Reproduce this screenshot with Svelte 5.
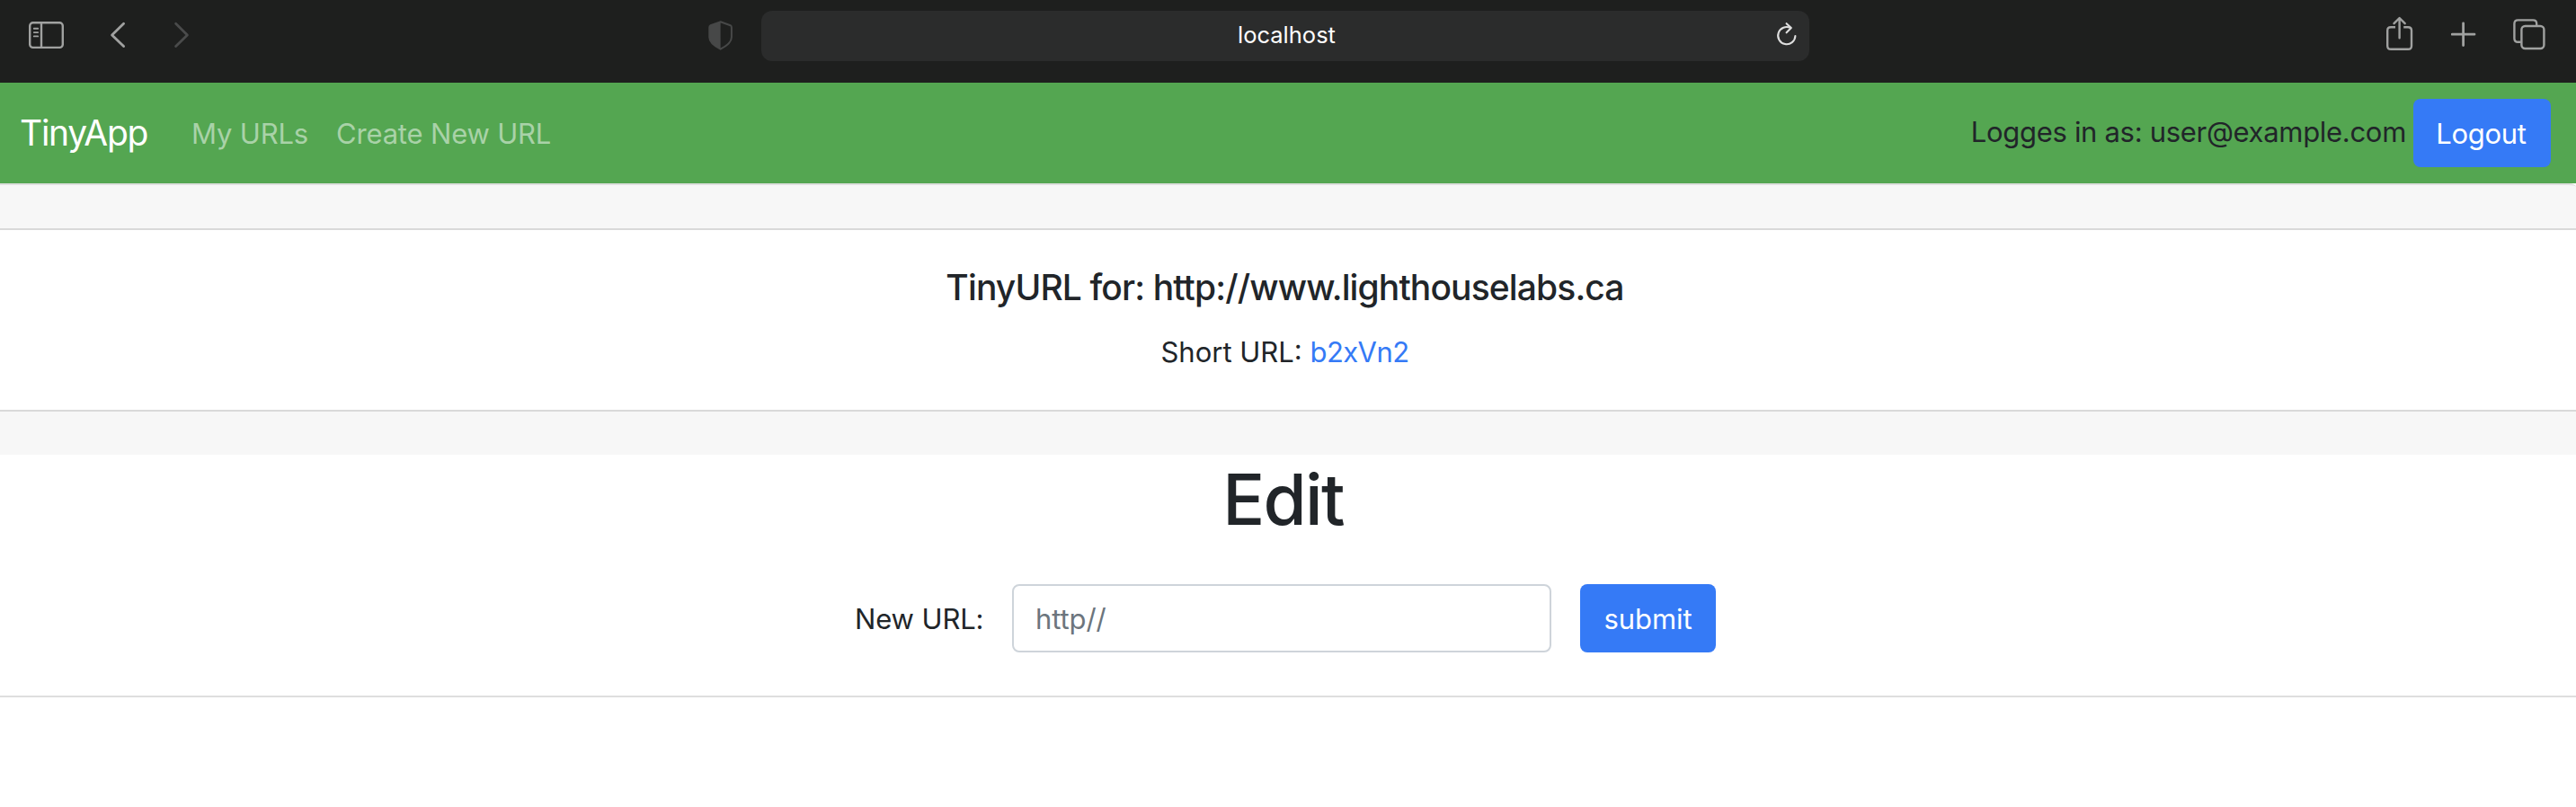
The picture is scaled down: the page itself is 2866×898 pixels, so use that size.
<script>
  let newUrl = $state('');
</script>

<div class="window">
  <div class="toolbar">
    <div class="left">
      <svg class="sidebar" width="40" height="32" viewBox="0 0 40 32" fill="none" stroke="#a0a1a0" stroke-width="2.4">
        <rect x="2.2" y="1.3" width="36.6" height="27.6" rx="3.5" />
        <path d="M15 2v27" />
        <path d="M6.8 7.8h4.4M6.8 12.1h4.4M6.8 16.4h4.4" stroke-width="1.9" stroke-linecap="round" />
      </svg>
      <svg class="back" width="18" height="30" viewBox="0 0 18 30" fill="none" stroke="#a0a1a0" stroke-width="2.8" stroke-linecap="round" stroke-linejoin="round"><path d="M15.6 2.3L2.6 15l13 12.6" /></svg>
      <svg width="18" height="30" viewBox="0 0 18 30" fill="none" stroke="#4a4b4b" stroke-width="2.8" stroke-linecap="round" stroke-linejoin="round"><path d="M2.6 2.3L15.4 15l-12.8 12.6" /></svg>
    </div>
    <svg class="shield" width="28" height="34" viewBox="0 0 28 34">
      <path d="M14.6 2.2L25.6 6.2Q26.9 6.8 26.9 8.4V19.5C26.9 25 20.5 29.6 14.6 32.6C8.7 29.6 2.3 25 2.3 19.5V8.4Q2.3 6.8 3.6 6.2Z" fill="none" stroke="#474848" stroke-width="2" />
      <path d="M14.6 2L3.6 6.2Q2.3 6.8 2.3 8.4V19.5C2.3 25 8.7 29.6 14.6 32.6Z" fill="#474848" />
    </svg>
    <div class="address">
      <span>localhost</span>
      <svg class="reload" width="24" height="28" viewBox="0 0 24 28" fill="none" stroke="#dedede" stroke-width="2.1" stroke-linecap="round" stroke-linejoin="round">
        <path d="M21.4 16A9.6 9.6 0 1 1 16.2 7.1" />
        <path d="M11.6 2.2l5.2 4.9-5.2 5.2" />
      </svg>
    </div>
    <div class="right">
      <svg width="32" height="40" viewBox="0 0 32 40" fill="none" stroke="#a0a1a0" stroke-width="2.4" stroke-linecap="round" stroke-linejoin="round">
        <path d="M11 12.2H6Q2.2 12.2 2.2 16V33Q2.2 36.8 6 36.8H25.2Q29 36.8 29 33V16Q29 12.2 25.2 12.2H20.2" stroke-linecap="butt" />
        <path d="M15.6 24.2V2.4M9.5 8.2l6.1-6.2 6.1 6.2" />
      </svg>
      <svg width="28" height="28" viewBox="0 0 28 28" stroke="#a0a1a0" stroke-width="2.8" stroke-linecap="round"><path d="M13.6 1.8v24.8M1.2 14.2h24.8" /></svg>
      <svg width="36" height="36" viewBox="0 0 36 36" fill="none" stroke="#a0a1a0" stroke-width="2.4">
        <rect x="9.4" y="9" width="25" height="25" rx="4" />
        <path d="M8.8 26.8H5.4Q1.4 26.8 1.4 22.8V6.4Q1.4 2.4 5.4 2.4H22.2Q26.2 2.4 26.2 6.4V8.4" />
      </svg>
    </div>
  </div>

  <nav>
    <a class="brand" href="#home">TinyApp</a>
    <a class="link urls" href="#urls">My URLs</a>
    <a class="link create" href="#new">Create New URL</a>
    <form class="session" onsubmit={(e) => e.preventDefault()}>
      <span>Logges in as: user@example.com</span>
      <button type="submit">Logout</button>
    </form>
  </nav>

  <main>
    <div class="strip top"></div>
    <section class="details">
      <h3>TinyURL for: http://www.lighthouselabs.ca</h3>
      <p><span>Short URL:</span> <a href="#short">b2xVn2</a></p>
    </section>
    <div class="strip"></div>
    <section class="edit">
      <h1>Edit</h1>
      <form class="row" onsubmit={(e) => e.preventDefault()}>
        <label for="new-url">New URL:</label>
        <input id="new-url" type="text" placeholder="http//" bind:value={newUrl} />
        <button type="submit">submit</button>
      </form>
    </section>
  </main>
</div>

<style>
  :global(body) { background: #fff; }
  .window {
    height: 898px;
    overflow: hidden;
    font: 400 31px/48px Inter, "Liberation Sans", sans-serif;
    color: #212529;
  }
  svg { display: block; flex: none; }
  a { text-decoration: none; }

  .toolbar {
    display: flex;
    box-sizing: border-box;
    height: 92px;
    background: #1e1f1e;
  }
  .left {
    display: flex;
    align-items: flex-start;
    box-sizing: border-box;
    width: 786px;
    padding: 24px 0 0 31px;
  }
  .sidebar { margin-right: 51px; }
  .back { margin-right: 53px; }
  .shield { margin: 22px 33px 0 1px; }
  .address {
    display: flex;
    align-items: center;
    box-sizing: border-box;
    width: 1166px;
    height: 56px;
    margin: 12px 0 0 -1px;
    padding: 0 12px 0 530px;
    border-radius: 12px;
    background: #2b2c2c;
    color: #fff;
    font-size: 25.5px;
    line-height: 52px;
  }
  .address span { padding-bottom: 2px; }
  .reload { margin: -4px 1px 0 auto; }
  .right {
    display: flex;
    align-items: center;
    gap: 41px;
    height: 76px;
    margin-left: auto;
    padding-right: 34px;
  }

  nav {
    display: flex;
    align-items: center;
    box-sizing: border-box;
    height: 112px;
    padding: 0 28px 0 22px;
    background: #54a651;
  }
  .brand {
    width: 191px;
    color: #fff;
    font-size: 39px;
    letter-spacing: -1.26px;
  }
  .link {
    padding-top: 1px;
    color: #a9d2a8;
    letter-spacing: -0.18px;
  }
  .urls { width: 161px; }
  .session {
    display: flex;
    align-items: center;
    gap: 8px;
    margin-left: auto;
  }
  .session span {
    padding-bottom: 3px;
    letter-spacing: -0.306px;
  }
  button {
    box-sizing: border-box;
    height: 76px;
    padding: 1px 0 0;
    border: 0;
    border-radius: 8px;
    background: #357af6;
    color: #fff;
    font: inherit;
  }
  .session button { width: 153px; padding-right: 2px; letter-spacing: -0.29px; }

  .strip { height: 48px; background: #f7f7f7; }
  .strip.top { border-top: 2px solid #dfdfdf; border-top-right-radius: 8px 4px; }
  .details {
    box-sizing: border-box;
    height: 204px;
    padding: 40px 7px 0 0;
    border-top: 2px solid #d9d9d9;
    border-bottom: 2px solid #d9d9d9;
    text-align: center;
  }
  h3 {
    margin: 0;
    font-size: 39px;
    font-weight: 500;
    line-height: 48px;
    letter-spacing: -0.88px;
  }
  p { margin: 24px 0 0; }
  p a { color: #357af6; letter-spacing: -0.56px; }
  .edit {
    display: flex;
    flex-direction: column;
    align-items: center;
    box-sizing: border-box;
    height: 270px;
    padding: 2px 6px 0 0;
    border-bottom: 2px solid #dedede;
  }
  h1 {
    margin: 0;
    padding-right: 5px;
    font-size: 78px;
    font-weight: 500;
    line-height: 96px;
    letter-spacing: -1.7px;
  }
  .row {
    display: flex;
    align-items: center;
    margin-top: 46px;
  }
  label { width: 175px; padding-top: 2px; letter-spacing: -0.13px; }
  input {
    box-sizing: border-box;
    width: 600px;
    height: 76px;
    margin-right: 32px;
    padding: 0 24px;
    border: 2px solid #ced4da;
    border-radius: 8px;
    background: #fff;
    color: #212529;
    font: inherit;
  }
  input::placeholder { color: #6c757d; opacity: 1; letter-spacing: -0.1px; }
  .row button { width: 151px; letter-spacing: -0.07px; }
</style>
